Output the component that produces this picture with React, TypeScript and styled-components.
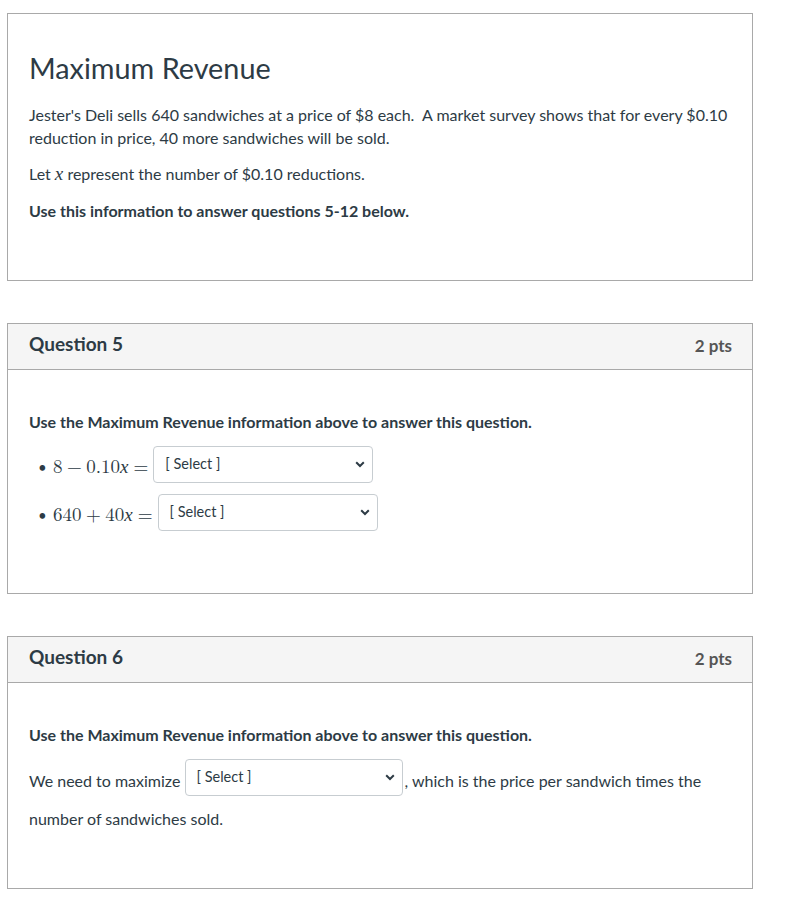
import React from "react";
import styled, { createGlobalStyle } from "styled-components";

const GlobalStyle = createGlobalStyle`
  html, body {
    margin: 0;
    padding: 0;
    background: #ffffff;
  }

  body {
    font-family: Lato, "Open Sans", sans-serif;
    color: #2d3b45;
  }
`;

const Page = styled.div`
  display: flex;
  flex-direction: column;
  gap: 42px;
  width: 746px;
  padding: 13px 0 0 7px;
`;

const Card = styled.section`
  box-sizing: border-box;
  width: 100%;
  border: 1px solid #a9a9a9;
  background: #ffffff;
`;

const Header = styled.header`
  display: flex;
  align-items: baseline;
  justify-content: space-between;
  box-sizing: border-box;
  height: 46px;
  padding: 9px 20px 0 21px;
  background: #f5f5f5;
  border-bottom: 1px solid #a9a9a9;
`;

const QuestionName = styled.h2`
  margin: 0;
  font-size: 19px;
  font-weight: 700;
  line-height: 1.2;
  color: #2d3b45;
`;

const Points = styled.span`
  font-size: 17px;
  font-weight: 700;
  color: #555555;
  transform: translateY(1px);
`;

const Body = styled.div<{ $top?: number }>`
  padding: ${(p) => p.$top ?? 40}px 21px 45px;
`;

const Title = styled.h1`
  margin: 0 0 17px;
  font-size: 28.8px;
  font-weight: 400;
  line-height: 1.2;
  color: #2d3b45;
`;

const Text = styled.p<{ $strong?: boolean }>`
  margin: 0 0 13px;
  font-size: 16px;
  line-height: 23px;
  font-weight: ${(p) => (p.$strong ? 700 : 400)};
`;

const Math = styled.span`
  font-family: "Latin Modern Math", "STIX Two Math", "Liberation Serif", serif;
  font-size: 19px;
  white-space: nowrap;
`;

const Var = styled.i`
  font-style: italic;
  font-family: "Liberation Serif", serif;
`;

const Op = styled.span`
  margin: 0 4.5px;
`;

const Rel = styled.span`
  margin: 0 5px;
`;

const List = styled.ul`
  list-style: none;
  margin: 0 0 6px;
  padding: 0;
`;

const Item = styled.li`
  display: block;
  line-height: 23px;
  font-size: 16px;

  &::before {
    content: "•";
    display: inline-block;
    width: 24px;
    text-indent: 9px;
    font-size: 15px;
  }
`;

const SelectWrap = styled.span<{ $width: number }>`
  position: relative;
  display: inline-block;
  width: ${(p) => p.$width}px;
  margin: 0 2px 11px 0;
  vertical-align: 4px;
`;

const Select = styled.select`
  appearance: none;
  box-sizing: border-box;
  width: 100%;
  height: 37px;
  padding: 0 28px 1px 11px;
  border: 1px solid #c7cdd1;
  border-radius: 4px;
  background: #ffffff;
  font-family: Lato, sans-serif;
  font-size: 14.5px;
  color: #2d3b45;
`;

const Chevron = styled.svg`
  position: absolute;
  right: 8px;
  top: 15px;
  pointer-events: none;
`;

const Dropdown = ({ width }: { width: number }) => (
  <SelectWrap $width={width}>
    <Select defaultValue="">
      <option value="">[ Select ]</option>
    </Select>
    <Chevron width="10" height="7" viewBox="0 0 10 7">
      <path d="M1.2 1.3 L5 5 L8.8 1.3" fill="none" stroke="#2d3b45" strokeWidth="2" />
    </Chevron>
  </SelectWrap>
);

export default function App() {
  return (
    <>
      <GlobalStyle />
      <Page>
        <Card>
          <Body $top={37}>
            <Title>Maximum Revenue</Title>
            <Text>
              Jester's Deli sells 640 sandwiches at a price of $8 each.&nbsp; A market survey shows that for every $0.10
              reduction in price, 40 more sandwiches will be sold.
            </Text>
            <Text>
              Let <Math><Var>x</Var></Math> represent the number of $0.10 reductions.
            </Text>
            <Text $strong>Use this information to answer questions 5-12 below.</Text>
          </Body>
        </Card>

        <Card>
          <Header>
            <QuestionName>Question 5</QuestionName>
            <Points>2 pts</Points>
          </Header>
          <Body>
            <Text $strong>Use the Maximum Revenue information above to answer this question.</Text>
            <List>
              <Item>
                <Math>
                  8<Op>−</Op>0.10<Var>x</Var>
                  <Rel>=</Rel>
                </Math>
                <Dropdown width={220} />
              </Item>
              <Item>
                <Math>
                  640<Op>+</Op>40<Var>x</Var>
                  <Rel>=</Rel>
                </Math>
                <Dropdown width={220} />
              </Item>
            </List>
          </Body>
        </Card>

        <Card>
          <Header>
            <QuestionName>Question 6</QuestionName>
            <Points>2 pts</Points>
          </Header>
          <Body>
            <Text $strong>Use the Maximum Revenue information above to answer this question.</Text>
            <Text>
              We need to maximize <Dropdown width={218} />, which is the price per sandwich times the number of
              sandwiches sold.
            </Text>
          </Body>
        </Card>
      </Page>
    </>
  );
}
